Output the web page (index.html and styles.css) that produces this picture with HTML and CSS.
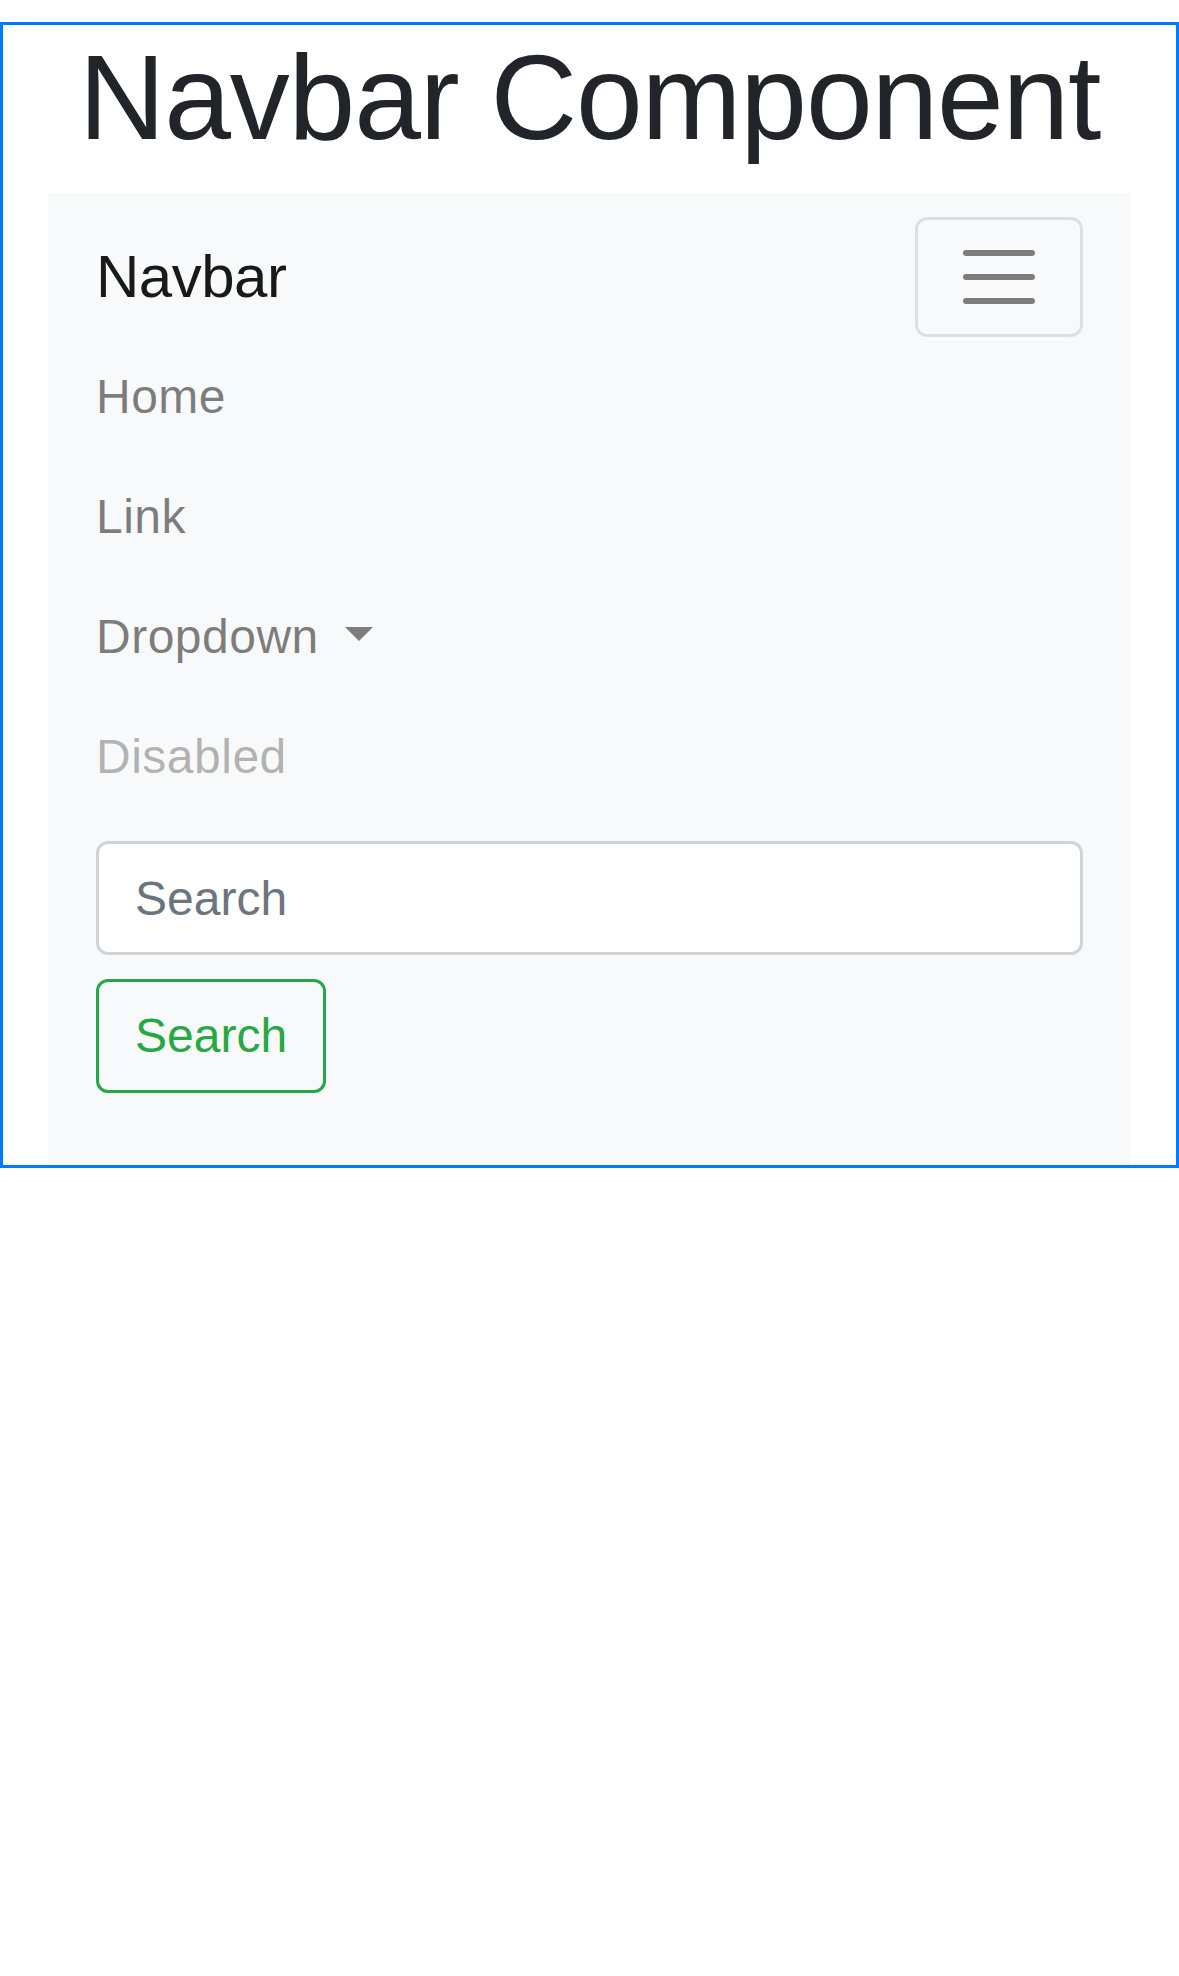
FILE: index.html
```html
<!DOCTYPE html>
<html lang="en">
<head>
<meta charset="utf-8">
<title>Navbar Component</title>
<link rel="stylesheet" href="styles.css">
</head>
<body>
<div class="frame">
  <h1 class="title">Navbar Component</h1>
  <nav class="navbar">
    <div class="navbar-top">
      <a class="brand" href="#">Navbar</a>
      <button class="toggler" type="button" aria-label="Toggle navigation">
        <svg class="toggler-icon" viewBox="0 0 30 30" width="90" height="90" aria-hidden="true">
          <path d="M4 7h22M4 15h22M4 23h22" stroke="rgba(0,0,0,0.5)" stroke-width="2" stroke-linecap="round" stroke-miterlimit="10" fill="none"/>
        </svg>
      </button>
    </div>
    <ul class="nav-list">
      <li><a class="nav-link" href="#">Home</a></li>
      <li><a class="nav-link" href="#">Link</a></li>
      <li><a class="nav-link" href="#">Dropdown <span class="caret"></span></a></li>
      <li><a class="nav-link disabled" href="#">Disabled</a></li>
    </ul>
    <form class="search-form">
      <input class="search-input" type="search" placeholder="Search" aria-label="Search">
      <button class="search-btn" type="submit">Search</button>
    </form>
  </nav>
</div>
</body>
</html>
```

FILE: styles.css
```css
html, body {
  margin: 0;
  padding: 0;
  background: #ffffff;
}

body {
  padding-top: 22px;
  font-family: "Liberation Sans", Arial, sans-serif;
  color: #212529;
}

.frame {
  border: 3px solid #007bff;
  padding: 0 45px;
}

.title {
  margin: 0 0 24px;
  font-size: 120px;
  line-height: 144px;
  font-weight: 500;
  letter-spacing: -1.2px;
  text-align: center;
  color: #212529;
}

.navbar {
  background: #f8f9fa;
  padding: 24px 48px;
}

.navbar-top {
  display: flex;
  justify-content: space-between;
  align-items: center;
}

.brand {
  display: inline-block;
  padding: 15px 0;
  font-size: 60px;
  line-height: 90px;
  letter-spacing: -0.5px;
  color: rgba(0, 0, 0, 0.9);
  text-decoration: none;
}

.toggler {
  display: flex;
  align-items: center;
  justify-content: center;
  box-sizing: border-box;
  width: 168px;
  height: 120px;
  padding: 12px 36px;
  background: transparent;
  border: 3px solid rgba(0, 0, 0, 0.1);
  border-radius: 12px;
}

.toggler-icon {
  display: block;
  flex: none;
}

.nav-list {
  list-style: none;
  margin: 0;
  padding: 0;
}

.nav-link {
  display: block;
  padding: 24px 0;
  font-size: 48px;
  line-height: 72px;
  letter-spacing: 0.5px;
  color: rgba(0, 0, 0, 0.5);
  text-decoration: none;
}

.nav-link.disabled {
  color: rgba(0, 0, 0, 0.3);
}

.caret {
  display: inline-block;
  margin-left: 12.24px;
  vertical-align: 12.24px;
  width: 0;
  height: 0;
  border-top: 14.4px solid rgba(0, 0, 0, 0.5);
  border-right: 14.4px solid transparent;
  border-left: 14.4px solid transparent;
  border-bottom: 0;
}

.search-form {
  display: flex;
  flex-direction: column;
  align-items: flex-start;
  margin: 24px 0;
}

.search-input {
  align-self: stretch;
  box-sizing: border-box;
  height: 114px;
  margin: 0;
  padding: 18px 36px;
  font-family: "Liberation Sans", Arial, sans-serif;
  font-size: 48px;
  line-height: 72px;
  color: #495057;
  background: #ffffff;
  border: 3px solid #ced4da;
  border-radius: 12px;
  outline: none;
  -webkit-appearance: none;
  appearance: none;
}

.search-input::placeholder {
  color: #6c757d;
  opacity: 1;
}

.search-btn {
  box-sizing: border-box;
  height: 114px;
  margin: 24px 0;
  padding: 18px 36px;
  font-family: "Liberation Sans", Arial, sans-serif;
  font-size: 48px;
  line-height: 72px;
  color: #28a745;
  background: transparent;
  border: 3px solid #28a745;
  border-radius: 12px;
}
```
